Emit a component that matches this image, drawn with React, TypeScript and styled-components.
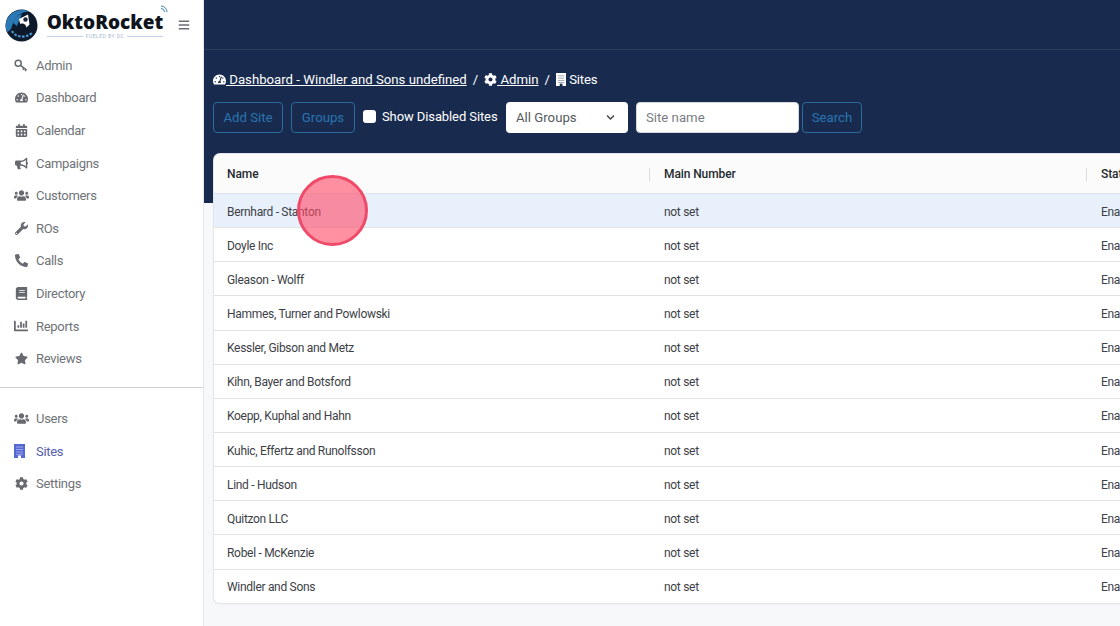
import React from "react";
import styled, { createGlobalStyle } from "styled-components";
import {
  FaBars,
  FaBook,
  FaBullhorn,
  FaCalendarAlt,
  FaChartBar,
  FaChevronDown,
  FaCog,
  FaPhoneAlt,
  FaStar,
  FaTachometerAlt,
  FaUsers,
  FaWrench,
} from "react-icons/fa";

const GlobalStyle = createGlobalStyle`
  html, body {
    margin: 0;
    height: 100%;
    overflow: hidden;
    background: #f7f8fa;
    font-family: Roboto, "Open Sans", sans-serif;
  }
  * { box-sizing: border-box; }
`;

const Page = styled.div`
  display: grid;
  grid-template-columns: 204px 1fr;
  width: 1120px;
  height: 626px;
  overflow: hidden;
`;

const Sidebar = styled.aside`
  background: #fff;
  border-right: 1px solid #e4e6ea;
  height: 626px;
`;

const Brand = styled.div`
  display: flex;
  align-items: center;
  height: 48px;
  padding: 2px 0 0 5px;
`;

const BrandText = styled.div`
  display: flex;
  flex-direction: column;
  align-items: center;
  margin-left: 8px;
  width: 118px;
  position: relative;
`;

const BrandName = styled.div`
  font-family: "Open Sans", sans-serif;
  font-weight: 800;
  font-size: 19px;
  line-height: 22px;
  color: #10141c;
`;

const Fueled = styled.div`
  display: flex;
  align-items: center;
  gap: 3px;
  width: 116px;
  font-size: 5px;
  line-height: 6px;
  letter-spacing: 0.5px;
  color: #a3b7d1;

  &::before,
  &::after {
    content: "";
    flex: 1;
    height: 1px;
    background: #c3d3e6;
  }
`;

const Signal = styled.svg`
  position: absolute;
  right: -4px;
  top: -6px;
`;

const MenuToggle = styled.div`
  display: flex;
  margin-left: 14px;
  color: #6c6f75;
  font-size: 12px;
`;

const NavList = styled.nav`
  display: flex;
  flex-direction: column;
  padding-top: 1px;
`;

const NavItem = styled.div<{ $active?: boolean }>`
  display: flex;
  align-items: center;
  height: 32.6px;
  padding-left: 13px;
  font-size: 13px;
  letter-spacing: -0.3px;
  color: ${(p) => (p.$active ? "#5660b0" : "#6f7377")};

  svg {
    color: ${(p) => (p.$active ? "#5468d4" : "#666a70")};
  }
`;

const NavIcon = styled.span`
  display: flex;
  justify-content: center;
  align-items: center;
  width: 16px;
  margin-right: 7px;
  font-size: 13px;
`;

const Divider = styled.hr`
  border: 0;
  border-top: 1px solid #cfd1d4;
  margin: 12.5px 0 13px;
`;

const Main = styled.main`
  min-width: 0;
  background: linear-gradient(#182b4e 203px, #f7f8fa 203px);
`;

const TopBar = styled.div`
  height: 50px;
  border-bottom: 1px solid #2c3e5e;
`;

const Content = styled.div`
  padding: 20px 0 0 9px;
`;

const Breadcrumb = styled.div`
  display: flex;
  align-items: center;
  gap: 6px;
  height: 18px;
  color: #fff;
  font-size: 13.2px;
`;

const Crumb = styled.a`
  display: inline-flex;
  align-items: center;
  color: #fff;
  text-decoration: underline;
  white-space: pre;

  svg {
    font-size: 13px;
  }
`;

const CurrentCrumb = styled.span`
  display: inline-flex;
  align-items: center;
  letter-spacing: -0.2px;
  white-space: pre;
`;

const Toolbar = styled.div`
  display: flex;
  align-items: center;
  height: 31px;
  margin-top: 14px;
`;

const OutlineButton = styled.button<{ $ml?: number; $width: number }>`
  width: ${(p) => p.$width}px;
  height: 31px;
  margin-left: ${(p) => p.$ml ?? 0}px;
  padding: 0;
  border: 1px solid #2a6a9e;
  border-radius: 4px;
  background: transparent;
  color: #2a74b0;
  font: 13.2px Roboto, sans-serif;
`;

const CheckLabel = styled.label`
  display: flex;
  align-items: center;
  width: 143px;
  margin-left: 8px;
  padding-bottom: 2px;
  color: #fff;
  font-size: 13px;
  letter-spacing: -0.1px;
  white-space: nowrap;
`;

const Check = styled.span`
  width: 13px;
  height: 13px;
  margin-right: 6px;
  background: #fff;
  border-radius: 3px;
`;

const Select = styled.div`
  display: flex;
  align-items: center;
  justify-content: space-between;
  width: 122px;
  height: 31px;
  padding: 0 13px 0 10px;
  background: #fff;
  border-radius: 4px;
  color: #555a60;
  font-size: 13.2px;

  svg {
    font-size: 9px;
    color: #444;
  }
`;

const SearchInput = styled.input`
  width: 163px;
  height: 31px;
  margin-left: 8px;
  padding: 0 9px;
  border: 1px solid #d5d8dc;
  border-radius: 4px;
  background: #fff;
  font: 13.2px Roboto, sans-serif;

  &::placeholder {
    color: #787d83;
    opacity: 1;
  }
`;

const Card = styled.div`
  width: 1311px;
  margin: 21px 0 0 1px;
  background: #fff;
  border-radius: 6px;
  box-shadow: 0 0 0 1px #e3e5e8, 0 1px 2px rgba(0, 0, 0, 0.08);
  overflow: hidden;
`;

const HeaderRow = styled.div`
  display: grid;
  grid-template-columns: repeat(3, 437px);
  height: 40px;
  padding-top: 1px;
  background: #fbfbfb;
  border-bottom: 1px solid #dfe3ea;
`;

const HeaderCell = styled.div<{ $sep?: boolean }>`
  display: flex;
  align-items: center;
  position: relative;
  padding-left: 13px;
  color: #262a2f;
  font-size: 12px;
  font-weight: 500;
  letter-spacing: -0.1px;

  &::before {
    content: "";
    display: ${(p) => (p.$sep ? "block" : "none")};
    position: absolute;
    left: -2px;
    top: 13px;
    width: 1px;
    height: 13px;
    background: #dcdcdc;
  }
`;

const Row = styled.div<{ $selected?: boolean }>`
  display: grid;
  grid-template-columns: repeat(3, 437px);
  align-items: center;
  height: 34.15px;
  padding-top: 2px;
  background: ${(p) => (p.$selected ? "#e8f0fb" : "#fff")};
  border-bottom: 1px solid #e2e4e7;

  &:last-child {
    height: 33.5px;
    border-bottom: 0;
  }
`;

const Cell = styled.div`
  padding-left: 13px;
  color: #3d4147;
  font-size: 12px;
  letter-spacing: -0.3px;
`;

const ClickMarker = styled.div`
  position: absolute;
  left: 297px;
  top: 175px;
  width: 71px;
  height: 71px;
  border: 3px solid #ef4a68;
  border-radius: 50%;
  background: rgba(255, 72, 102, 0.6);
`;

const KeyIcon = () => (
  <svg width="14" height="13" viewBox="0 0 14 13" fill="none" stroke="currentColor" strokeWidth="1.5">
    <circle cx="4.2" cy="4.2" r="3" />
    <path d="M6.5 6.3 12.6 11.2M10 9.2l-1.3 1.5M12 10.8l-1 1.2" />
  </svg>
);

// solid tower with window bands and a door, the sites mark
const SiteIcon = ({ size = 14, detail = "#ffffff" }: { size?: number; detail?: string }) => (
  <svg width={(size * 11) / 14} height={size} viewBox="0 0 11 14" style={{ marginRight: 3 }}>
    <path fill="currentColor" d="M0 0h11v14H0z" />
    <path stroke={detail} strokeOpacity="0.55" strokeWidth="0.8" d="M2 3h7M2 5.5h7M2 8h7M2 10.3h7" />
    <path fill={detail} d="M4 11.5h3V14H4z" />
  </svg>
);

const LogoMark = () => (
  <svg width="33" height="33" viewBox="0 0 33 33">
    <circle cx="16.5" cy="16.5" r="16" fill="#0c1a2c" />
    <path d="M2 23A16 16 0 0 1 24 2.5 17 17 0 0 0 8 14c-1.5 4-1 7-6 9z" fill="#2a78b4" />
    <path d="M8 14A13 13 0 0 1 17 5l-3 7-2 5z" fill="#2a78b4" />
    <path d="M14 10l9-4.5 1.5 10-4 4-5-3z" fill="#fff" />
    <circle cx="20.5" cy="10.5" r="2.2" fill="#16263c" />
    <circle cx="17" cy="19" r="4.5" fill="#0c1a2c" />
    <path d="M7 22c3 6 13 8 20 2" fill="none" stroke="#4b98d0" strokeWidth="2.2" strokeDasharray="2.5 1.5" />
  </svg>
);

const mainNav = [
  { label: "Admin", icon: <KeyIcon /> },
  { label: "Dashboard", icon: <FaTachometerAlt /> },
  { label: "Calendar", icon: <FaCalendarAlt /> },
  { label: "Campaigns", icon: <FaBullhorn /> },
  { label: "Customers", icon: <FaUsers size={15} /> },
  { label: "ROs", icon: <FaWrench /> },
  { label: "Calls", icon: <FaPhoneAlt /> },
  { label: "Directory", icon: <FaBook /> },
  { label: "Reports", icon: <FaChartBar size={14} /> },
  { label: "Reviews", icon: <FaStar /> },
];

const sites = [
  "Bernhard - Stanton",
  "Doyle Inc",
  "Gleason - Wolff",
  "Hammes, Turner and Powlowski",
  "Kessler, Gibson and Metz",
  "Kihn, Bayer and Botsford",
  "Koepp, Kuphal and Hahn",
  "Kuhic, Effertz and Runolfsson",
  "Lind - Hudson",
  "Quitzon LLC",
  "Robel - McKenzie",
  "Windler and Sons",
];

export default function App() {
  return (
    <Page>
      <GlobalStyle />
      <Sidebar>
        <Brand>
          <LogoMark />
          <BrandText>
            <BrandName>OktoRocket</BrandName>
            <Fueled>FUELED BY DC</Fueled>
            <Signal width="8" height="8" viewBox="0 0 8 8" fill="none" stroke="#3f83b8" strokeWidth="1">
              <path d="M1 1a6 6 0 0 1 6 6M1 3.5A3.5 3.5 0 0 1 4.5 7" />
            </Signal>
          </BrandText>
          <MenuToggle>
            <FaBars />
          </MenuToggle>
        </Brand>
        <NavList>
          {mainNav.map((item) => (
            <NavItem key={item.label}>
              <NavIcon>{item.icon}</NavIcon>
              {item.label}
            </NavItem>
          ))}
        </NavList>
        <Divider />
        <NavList>
          <NavItem>
            <NavIcon><FaUsers size={15} /></NavIcon>
            Users
          </NavItem>
          <NavItem $active>
            <NavIcon><SiteIcon /></NavIcon>
            Sites
          </NavItem>
          <NavItem>
            <NavIcon><FaCog /></NavIcon>
            Settings
          </NavItem>
        </NavList>
      </Sidebar>
      <Main>
        <TopBar />
        <Content>
          <Breadcrumb>
            <Crumb href="#"><FaTachometerAlt /> Dashboard - Windler and Sons undefined</Crumb>
            <span>/</span>
            <Crumb href="#"><FaCog /> Admin</Crumb>
            <span>/</span>
            <CurrentCrumb><SiteIcon size={13} detail="#182b4e" />Sites</CurrentCrumb>
          </Breadcrumb>
          <Toolbar>
            <OutlineButton $width={70}>Add Site</OutlineButton>
            <OutlineButton $width={64} $ml={8}>Groups</OutlineButton>
            <CheckLabel><Check />Show Disabled Sites</CheckLabel>
            <Select>All Groups<FaChevronDown /></Select>
            <SearchInput placeholder="Site name" />
            <OutlineButton $width={60} $ml={3}>Search</OutlineButton>
          </Toolbar>
          <Card>
            <HeaderRow>
              <HeaderCell>Name</HeaderCell>
              <HeaderCell $sep>Main Number</HeaderCell>
              <HeaderCell $sep>Status</HeaderCell>
            </HeaderRow>
            {sites.map((site, i) => (
              <Row key={site} $selected={i === 0}>
                <Cell>{site}</Cell>
                <Cell>not set</Cell>
                <Cell>Enabled</Cell>
              </Row>
            ))}
          </Card>
        </Content>
      </Main>
      <ClickMarker />
    </Page>
  );
}
